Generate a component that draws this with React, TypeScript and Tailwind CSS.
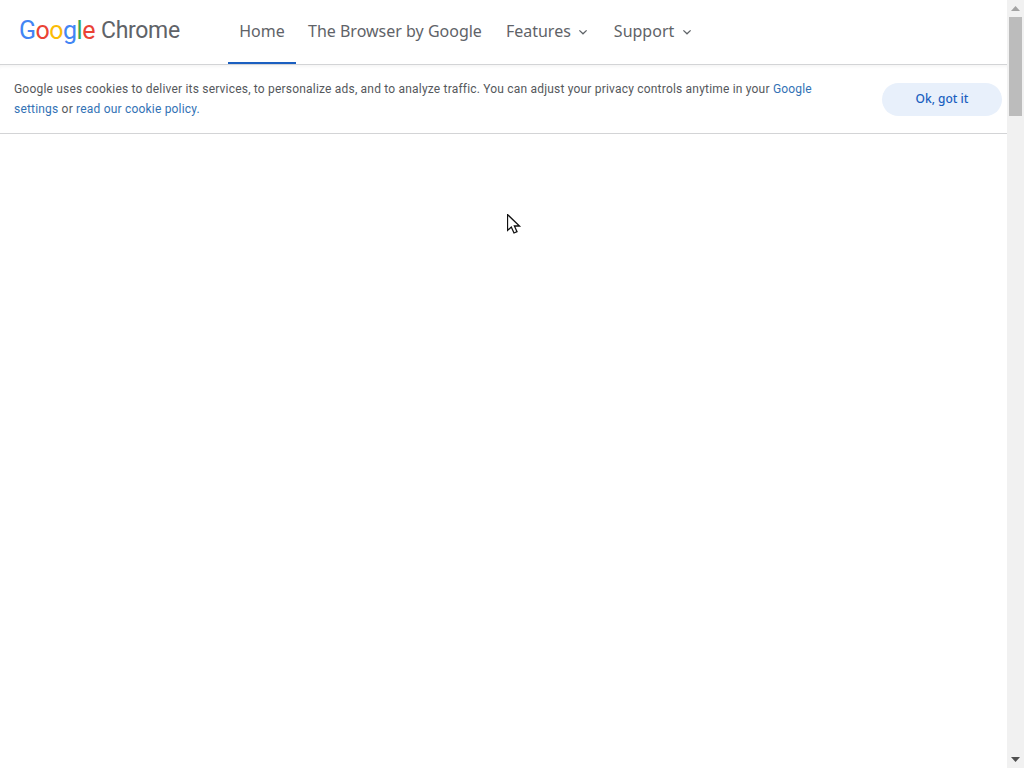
import React from "react";

function Chevron({ className }: { className: string }) {
  return (
    <svg width="10" height="7" viewBox="0 0 10 7" fill="none" className={className}>
      <path d="M1.4 1.4 L5 4.8 L8.6 1.4" stroke="#5f6368" strokeWidth="1.3" />
    </svg>
  );
}

function Cursor() {
  return (
    <svg width="16" height="22" viewBox="0 0 16 22" className="absolute left-[507px] top-[214px]">
      <path
        d="M0.5 0.5 V16.5 L4.3 13 L7 19 L10 17.7 L7.4 12 H12.5 Z"
        fill="#fff"
        stroke="#111"
        strokeWidth="1.3"
        strokeLinejoin="miter"
      />
    </svg>
  );
}

const letters: [string, string][] = [
  ["G", "#4285f4"],
  ["o", "#ea4335"],
  ["o", "#fbbc05"],
  ["g", "#4285f4"],
  ["l", "#34a853"],
  ["e", "#ea4335"],
];

export default function App() {
  return (
    <div className="relative flex h-screen overflow-hidden bg-white font-['Roboto',sans-serif]">
      <div className="flex min-w-0 flex-1 flex-col">
        <header className="flex h-[65px] shrink-0 items-stretch border-b border-[#d3d4d6] bg-white">
          <div className="ml-[19px] flex w-[209px] items-center pb-[3px] font-['Roboto',sans-serif] leading-none">
            <span className="text-[25px] font-normal tracking-[-0.5px]">
              {letters.map(([c, col], i) => (
                <span key={i} style={{ color: col }}>
                  {c}
                </span>
              ))}
            </span>
            <span className="ml-[6px] text-[23px] tracking-[-0.3px] text-[#5f6368]">Chrome</span>
          </div>
          <nav className="flex items-stretch font-['Noto_Sans',sans-serif] text-[16px] text-[#5f6368]">
            <a className="flex w-[68px] items-center justify-center border-b-2 border-[#1a5fc0]">Home</a>
            <a className="ml-[12px] flex items-center pb-[2px]">The Browser by Google</a>
            <a className="ml-[24px] flex items-center pb-[2px]">
              Features
              <Chevron className="ml-[7px] mt-[3px]" />
            </a>
            <a className="ml-[26px] flex items-center pb-[2px]">
              Support
              <Chevron className="ml-[8px] mt-[3px]" />
            </a>
          </nav>
        </header>
        <section className="flex h-[69px] shrink-0 items-center justify-between border-b border-[#d3d4d6] bg-white pl-[14px] pr-[5px] shadow-[inset_0_4px_4px_-3px_rgba(0,0,0,0.06)]">
          <p className="w-[830px] text-[12px] leading-[20px] tracking-[0.195px] text-[#55585c]">
            Google uses cookies to deliver its services, to personalize ads, and to analyze traffic. You can adjust your
            privacy controls anytime in your <a className="text-[#3272b5]">Google settings</a> or{" "}
            <a className="text-[#3272b5]">read our cookie policy.</a>
          </p>
          <button className="h-[33px] w-[120px] rounded-full bg-[#e8f0fb] font-['Noto_Sans',sans-serif] text-[12px] font-medium text-[#1a5fc0]">
            Ok, got it
          </button>
        </section>
        <main className="flex-1 bg-white" />
      </div>
      <aside className="flex w-[17px] shrink-0 flex-col items-center bg-[#f1f1f1]">
        <div className="flex h-[17px] w-full items-center justify-center">
          <svg width="9" height="5" viewBox="0 0 9 5">
            <path d="M4.5 0 L9 5 H0 Z" fill="#a3a3a3" />
          </svg>
        </div>
        <div className="h-[99px] w-[13px] bg-[#bcbcbc]" />
        <div className="flex-1" />
        <div className="flex h-[17px] w-full items-center justify-center">
          <svg width="9" height="5" viewBox="0 0 9 5">
            <path d="M0 0 H9 L4.5 5 Z" fill="#505050" />
          </svg>
        </div>
      </aside>
      <Cursor />
    </div>
  );
}
